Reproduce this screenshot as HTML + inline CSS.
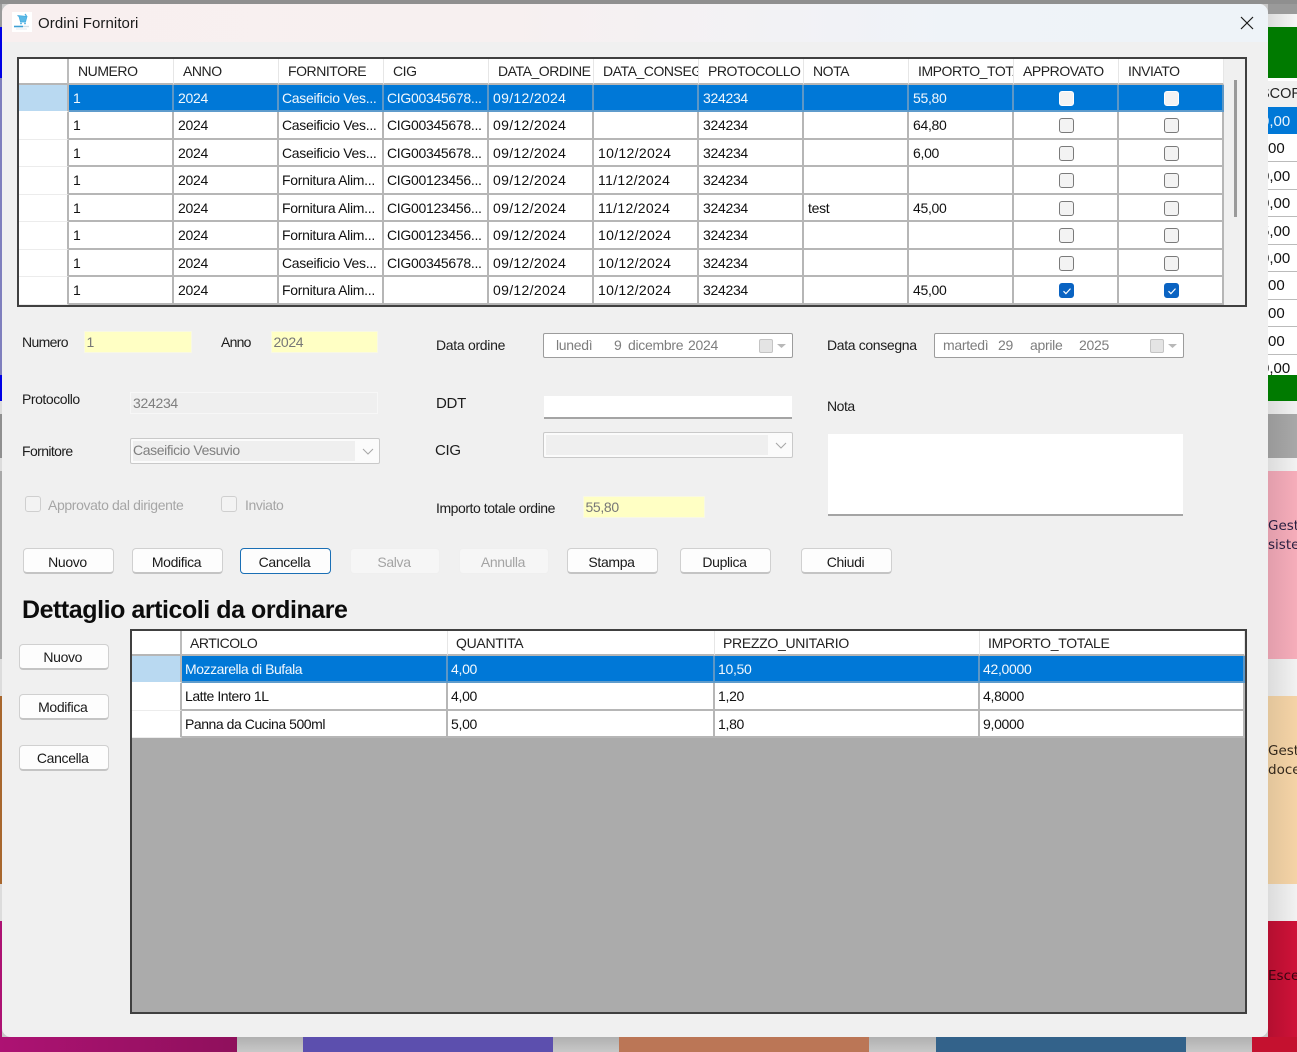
<!DOCTYPE html>
<html lang="it">
<head>
<meta charset="utf-8">
<title>Ordini Fornitori</title>
<style>
html,body{margin:0;padding:0;background:#c8c8c8}
body{position:relative;width:1297px;height:1052px;overflow:hidden;font-family:"Liberation Sans",sans-serif;font-size:14px;color:#111}
.a{position:absolute}
.t{position:absolute;white-space:nowrap;line-height:18px}
#dlg{position:absolute;left:2px;top:4px;width:1266px;height:1033px;background:#f0f0f0;border-radius:9px;overflow:hidden}
#tb{position:absolute;left:0;top:0;width:1266px;height:38px;background:linear-gradient(90deg,#f8efef 0%,#f7f0f0 40%,#eff3f8 75%,#eef3f8 100%)}
.grid{position:absolute;box-sizing:border-box;border:2px solid #404040;overflow:hidden}
.row{position:absolute;left:0;display:flex;box-sizing:border-box;background:#fff;font-size:14px;letter-spacing:-.3px}
.row>div{box-sizing:border-box;border-right:2px solid #b6b6b6;border-bottom:2px solid #b6b6b6;padding-left:3px;line-height:26px;white-space:nowrap;overflow:hidden;position:relative}
.row>div:first-child{border-bottom:1px solid #ececec;border-right:2px solid #b6b6b6}
.g1 .row>div{width:105px}
.g1 .row>div:first-child{width:50px}
.g1 .row>div:nth-child(2),.g1 .row>div:nth-child(3),.g1 .row>div:nth-child(6),.g1 .row>div:nth-child(7),.g1 .row>div:nth-child(8),.g1 .row>div:nth-child(9),.g1 .row>div:nth-child(10){padding-left:4px}
.g1 .row:not(.hd)>div:nth-child(6),.g1 .row:not(.hd)>div:nth-child(7){letter-spacing:.32px}
.hd>div{padding-left:9px!important;color:#222;border-right:1px solid #e6e6e6!important;border-bottom:2px solid #b6b6b6!important;line-height:25px!important;letter-spacing:-.45px}
.hd>div:first-child{border-right:2px solid #bcbcbc!important}
.sel{background:#0078d7;color:#f2f8fd}
.sel>div{border-color:#5d97c6!important;border-bottom-color:#5f9ccc!important}
.sel>div:first-child{background:#b9d9f1;border-bottom-color:#fff!important;border-right-color:#b6b6b6!important}
.cb{position:absolute;left:44.500px;top:6px;width:15px;height:15px;box-sizing:border-box;border:1.5px solid #7a7a7a;border-radius:3px;background:#f3f3f3}
.sel .cb{border-color:#fff;background:#f3f3f3}
.cb.on{background:#0a63c2;border-color:#0a63c2}
.cb.on svg{position:absolute;left:1px;top:1px}
.btn{position:absolute;box-sizing:border-box;width:91px;height:26px;background:#fdfdfd;border:1px solid #d0d0d0;border-bottom:2px solid #c4c4c4;border-radius:4px;text-align:center;line-height:25.5px;font-size:14px;letter-spacing:-.35px;color:#1a1a1a;padding-right:2px}
.btn.tp{line-height:27px}
.btn.dis{background:#f6f6f6;border:1px solid #efefef;color:#a4a4a4}
.btn.foc{border:1.5px solid #1a6fb5;}
.lb{position:absolute;white-space:nowrap;font-size:14px;letter-spacing:-.45px;color:#1d1d1d;line-height:18px}
.yl{position:absolute;background:#ffffc4;color:#777;font-size:14px;line-height:20px;padding-left:1.5px;box-sizing:border-box;letter-spacing:-.35px;border:1px solid #f8f8e4}
.dp{position:absolute;box-sizing:border-box;width:250px;height:25px;background:#fff;border:1px solid #9c9c9c;border-radius:2px;color:#7d7d7d;font-size:14px;line-height:23px;letter-spacing:-.3px}
.dp span{position:absolute;top:0;white-space:nowrap}
.dp svg{position:absolute;left:214px;top:4px}
.combo{position:absolute;box-sizing:border-box;width:250px;height:26px;background:#fbfbfb;border:1px solid #c9c9c9;border-radius:2px}
.combo i{position:absolute;left:2px;top:2px;width:222px;height:20px;background:#efefef;font-style:normal;color:#7f7f7f;line-height:19px;letter-spacing:-.38px;white-space:nowrap;font-size:14px}
.combo svg{position:absolute;left:231px;top:9px}
.g2 .row>div:nth-child(2){letter-spacing:-.45px}
.g2 .hd>div{padding-left:8px!important;letter-spacing:-.3px}
.g2 .hd>div:nth-child(2){padding-left:8px!important;letter-spacing:-.5px}
.side{position:absolute;font-family:"DejaVu Sans",sans-serif;font-size:13.5px;color:#222;white-space:nowrap;overflow:hidden;left:1268px;width:29px}
.v{position:absolute;left:1268px;width:29px;overflow:hidden;white-space:nowrap;line-height:18px;font-size:15px}
.v.cut{text-indent:-7px}
</style>
</head>
<body>
<!-- background app behind dialog -->
<div class="a" style="left:0;top:0;width:1297px;height:4px;background:#8f8f8f"></div>
<div class="a" style="left:1268px;top:4px;width:29px;height:10px;background:#9a9a9a"></div>
<div class="a" style="left:1268px;top:14px;width:29px;height:13px;background:linear-gradient(90deg,#dcdcdc,#f6f6f6)"></div>
<div class="a" style="left:1268px;top:27px;width:29px;height:51px;background:#007a00"></div>
<div class="a" style="left:1268px;top:78px;width:29px;height:297px;background:#fff"></div>
<div class="a" style="left:1268px;top:81px;width:29px;height:26px;background:#f0f0f0"></div>
<div class="a" style="left:1268px;top:107px;width:29px;height:27px;background:#0078d7"></div>
<div class="a" style="left:1268px;top:161px;width:29px;height:1px;background:#bbb"></div>
<div class="a" style="left:1268px;top:189px;width:29px;height:1px;background:#bbb"></div>
<div class="a" style="left:1268px;top:216px;width:29px;height:1px;background:#bbb"></div>
<div class="a" style="left:1268px;top:244px;width:29px;height:1px;background:#bbb"></div>
<div class="a" style="left:1268px;top:271px;width:29px;height:1px;background:#bbb"></div>
<div class="a" style="left:1268px;top:299px;width:29px;height:1px;background:#bbb"></div>
<div class="a" style="left:1268px;top:326px;width:29px;height:1px;background:#bbb"></div>
<div class="a" style="left:1268px;top:354px;width:29px;height:1px;background:#bbb"></div>
<div class="v" style="top:85px;font-size:14.5px;color:#222;text-indent:-8px">SCOR</div>
<div class="v cut" style="top:113px;color:#eaf4fc">0,00</div>
<div class="v" style="top:140px">00</div>
<div class="v cut" style="top:168px">0,00</div>
<div class="v cut" style="top:195px">0,00</div>
<div class="v cut" style="top:223px">5,00</div>
<div class="v cut" style="top:250px">0,00</div>
<div class="v" style="top:277px">00</div>
<div class="v" style="top:305px">00</div>
<div class="v" style="top:333px">00</div>
<div class="v cut" style="top:360px">0,00</div>
<div class="a" style="left:1268px;top:375px;width:29px;height:26px;background:#007a00"></div>
<div class="a" style="left:1268px;top:401px;width:29px;height:13px;background:linear-gradient(90deg,#dcdcdc,#f2f2f2)"></div>
<div class="a" style="left:1268px;top:414px;width:29px;height:44px;background:linear-gradient(90deg,#999,#a8a8a8)"></div>
<div class="a" style="left:1268px;top:458px;width:29px;height:13px;background:linear-gradient(90deg,#dcdcdc,#f2f2f2)"></div>
<div class="a" style="left:1268px;top:471px;width:29px;height:188px;background:linear-gradient(90deg,#e29eac,#f6adba)"></div>
<div class="a" style="left:1268px;top:659px;width:29px;height:37px;background:linear-gradient(90deg,#dcdcdc,#f2f2f2)"></div>
<div class="a" style="left:1268px;top:696px;width:29px;height:188px;background:linear-gradient(90deg,#e2c59b,#f5d3a6)"></div>
<div class="a" style="left:1268px;top:884px;width:29px;height:37px;background:linear-gradient(90deg,#dcdcdc,#f2f2f2)"></div>
<div class="a" style="left:1268px;top:921px;width:29px;height:131px;background:linear-gradient(90deg,#b40f30,#cf1238)"></div>
<div class="side" style="top:517px;line-height:19px;color:#2a2040">Gest<br>siste</div>
<div class="side" style="top:742px;line-height:19px;color:#33281c">Gest<br>doce</div>
<div class="side" style="top:967px;line-height:19px;color:#3a0410">Esce</div>

<!-- left strip -->
<div class="a" style="left:0;top:4px;width:2px;height:23px;background:#9a9a9a"></div>
<div class="a" style="left:0;top:27px;width:2px;height:51px;background:#0000e6"></div>
<div class="a" style="left:0;top:78px;width:2px;height:297px;background:#7f7fbd"></div>
<div class="a" style="left:0;top:375px;width:2px;height:26px;background:#0000e6"></div>
<div class="a" style="left:0;top:401px;width:2px;height:13px;background:#dcdcdc"></div>
<div class="a" style="left:0;top:414px;width:2px;height:44px;background:#8f8f8f"></div>
<div class="a" style="left:0;top:458px;width:2px;height:13px;background:#dcdcdc"></div>
<div class="a" style="left:0;top:471px;width:2px;height:188px;background:#a8a8a8"></div>
<div class="a" style="left:0;top:659px;width:2px;height:37px;background:#dcdcdc"></div>
<div class="a" style="left:0;top:696px;width:2px;height:188px;background:#a8672e"></div>
<div class="a" style="left:0;top:884px;width:2px;height:37px;background:#dcdcdc"></div>
<div class="a" style="left:0;top:921px;width:2px;height:131px;background:#ad1273"></div>

<!-- bottom strip -->
<div class="a" style="left:0;top:1037px;width:1297px;height:15px;background:linear-gradient(#b0b0b0,#c8c8c8)"></div>
<div class="a" style="left:0;top:1037px;width:237px;height:15px;background:linear-gradient(90deg,#ad1273,#8f105c)"></div>
<div class="a" style="left:303px;top:1037px;width:250px;height:15px;background:#5c4fae"></div>
<div class="a" style="left:619px;top:1037px;width:250px;height:15px;background:#bb7656"></div>
<div class="a" style="left:936px;top:1037px;width:250px;height:15px;background:#33628a"></div>
<div class="a" style="left:1252px;top:1037px;width:45px;height:15px;background:#c4112f"></div>

<div id="dlg">
  <div id="tb"></div>
</div>

<!-- title bar -->
<div class="a" style="left:12px;top:12px;width:20px;height:20px;background:#fff">
  <svg width="20" height="20" viewBox="0 0 20 20"><path d="M5.5 3.5l1.5 1 1.5 5.500h5l1.500-5.500z" fill="#5bb9e6" stroke="#45ace0" stroke-width=".8"/><path d="M13 2l1.500 2" stroke="#45ace0" stroke-width="1.200"/><circle cx="9" cy="11.500" r=".9" fill="#45ace0"/><circle cx="13" cy="11.500" r=".9" fill="#45ace0"/><path d="M2 14.500h9" stroke="#3d9fd4" stroke-width="1.600"/><path d="M11 14.500h6" stroke="#d3dfe6" stroke-width="1.400"/><path d="M4 17h11" stroke="#e2ebf0" stroke-width="1"/></svg>
</div>
<div class="t" style="left:38px;top:15px;font-size:15px;color:#1a1a1a;letter-spacing:.08px">Ordini Fornitori</div>
<svg class="a" style="left:1240px;top:16px" width="14" height="14" viewBox="0 0 14 14"><path d="M1 1l12 12M13 1L1 13" stroke="#1a1a1a" stroke-width="1.2" fill="none"/></svg>

<!-- top grid -->
<div class="grid g1" style="left:17px;top:57px;width:1230px;height:250px;background:#f0f0f0">
  <div class="row hd" style="top:0;height:25.5px;width:1205px"><div></div><div>NUMERO</div><div>ANNO</div><div>FORNITORE</div><div>CIG</div><div>DATA_ORDINE</div><div>DATA_CONSEGNA</div><div>PROTOCOLLO</div><div>NOTA</div><div>IMPORTO_TOTALE</div><div>APPROVATO</div><div>INVIATO</div></div>
  <div class="row sel" style="top:25.5px;height:27.5px"><div></div><div>1</div><div>2024</div><div>Caseificio Ves...</div><div>CIG00345678...</div><div>09/12/2024</div><div></div><div>324234</div><div></div><div>55,80</div><div><span class="cb"></span></div><div><span class="cb"></span></div></div>
  <div class="row" style="top:53px;height:27.5px"><div></div><div>1</div><div>2024</div><div>Caseificio Ves...</div><div>CIG00345678...</div><div>09/12/2024</div><div></div><div>324234</div><div></div><div>64,80</div><div><span class="cb"></span></div><div><span class="cb"></span></div></div>
  <div class="row" style="top:80.5px;height:27.5px"><div></div><div>1</div><div>2024</div><div>Caseificio Ves...</div><div>CIG00345678...</div><div>09/12/2024</div><div>10/12/2024</div><div>324234</div><div></div><div>6,00</div><div><span class="cb"></span></div><div><span class="cb"></span></div></div>
  <div class="row" style="top:108px;height:27.5px"><div></div><div>1</div><div>2024</div><div>Fornitura Alim...</div><div>CIG00123456...</div><div>09/12/2024</div><div>11/12/2024</div><div>324234</div><div></div><div></div><div><span class="cb"></span></div><div><span class="cb"></span></div></div>
  <div class="row" style="top:135.5px;height:27.5px"><div></div><div>1</div><div>2024</div><div>Fornitura Alim...</div><div>CIG00123456...</div><div>09/12/2024</div><div>11/12/2024</div><div>324234</div><div>test</div><div>45,00</div><div><span class="cb"></span></div><div><span class="cb"></span></div></div>
  <div class="row" style="top:163px;height:27.5px"><div></div><div>1</div><div>2024</div><div>Fornitura Alim...</div><div>CIG00123456...</div><div>09/12/2024</div><div>10/12/2024</div><div>324234</div><div></div><div></div><div><span class="cb"></span></div><div><span class="cb"></span></div></div>
  <div class="row" style="top:190.5px;height:27.5px"><div></div><div>1</div><div>2024</div><div>Caseificio Ves...</div><div>CIG00345678...</div><div>09/12/2024</div><div>10/12/2024</div><div>324234</div><div></div><div></div><div><span class="cb"></span></div><div><span class="cb"></span></div></div>
  <div class="row" style="top:218px;height:27.5px"><div></div><div>1</div><div>2024</div><div>Fornitura Alim...</div><div></div><div>09/12/2024</div><div>10/12/2024</div><div>324234</div><div></div><div>45,00</div><div><span class="cb on"><svg width="12" height="12" viewBox="0 0 12 12"><path d="M2.5 6.2l2.4 2.4 4.6-5" stroke="#fff" stroke-width="1.2" fill="none"/></svg></span></div><div><span class="cb on"><svg width="12" height="12" viewBox="0 0 12 12"><path d="M2.5 6.2l2.4 2.4 4.6-5" stroke="#fff" stroke-width="1.2" fill="none"/></svg></span></div></div>
  <div class="a" style="left:1215px;top:21px;width:3px;height:137px;background:#9a9a9a"></div>
</div>

<!-- form -->
<div class="lb" style="left:22px;top:333px;letter-spacing:-.65px">Numero</div>
<div class="yl" style="left:84px;top:331px;width:108px;height:22px">1</div>
<div class="lb" style="left:221px;top:333px;letter-spacing:-.75px">Anno</div>
<div class="yl" style="left:271px;top:331px;width:107px;height:22px">2024</div>

<div class="lb" style="left:436px;top:336px;letter-spacing:-.3px">Data ordine</div>
<div class="dp" style="left:543px;top:333px"><span style="left:12px">lunedì</span><span style="left:70px">9</span><span style="left:84px">dicembre</span><span style="left:144px">2024</span><svg width="32" height="16" viewBox="0 0 32 16"><rect x="1.5" y="1.5" width="13" height="13" rx="1.5" fill="#e4e4e4" stroke="#c4c4c4"/><path d="M19 6h9l-4.500 4z" fill="#b8b8b8"/></svg></div>
<div class="lb" style="left:827px;top:336px;letter-spacing:-.35px">Data consegna</div>
<div class="dp" style="left:934px;top:333px"><span style="left:8px">martedì</span><span style="left:63px">29</span><span style="left:95px">aprile</span><span style="left:144px">2025</span><svg width="32" height="16" viewBox="0 0 32 16"><rect x="1.5" y="1.5" width="13" height="13" rx="1.5" fill="#e4e4e4" stroke="#c4c4c4"/><path d="M19 6h9l-4.500 4z" fill="#b8b8b8"/></svg></div>

<div class="lb" style="left:22px;top:390px">Protocollo</div>
<div class="a" style="left:130px;top:392px;width:248px;height:22px;box-sizing:border-box;background:#efefef;border:1px solid #f7f7f7;color:#7f7f7f;line-height:21px;padding-left:2px;letter-spacing:-.3px">324234</div>
<div class="lb" style="left:436px;top:395px;font-size:15px;letter-spacing:-.3px">DDT</div>
<div class="a" style="left:544px;top:396px;width:248px;height:23px;background:#fff;border-bottom:2px solid #a4a4a4;box-sizing:border-box"></div>
<div class="lb" style="left:827px;top:397px">Nota</div>
<div class="a" style="left:828px;top:434px;width:355px;height:82px;background:#fff;border-bottom:2px solid #a4a4a4;box-sizing:border-box"></div>

<div class="lb" style="left:22px;top:442px;letter-spacing:-.6px">Fornitore</div>
<div class="combo" style="left:130px;top:438px"><i>Caseificio Vesuvio</i><svg width="12" height="8" viewBox="0 0 12 8"><path d="M1 1l5 5 5-5" stroke="#a8a8a8" stroke-width="1.1" fill="none"/></svg></div>
<div class="lb" style="left:435px;top:442px;font-size:15px;letter-spacing:-.3px">CIG</div>
<div class="combo" style="left:543px;top:432px"><i></i><svg width="12" height="8" viewBox="0 0 12 8"><path d="M1 1l5 5 5-5" stroke="#a8a8a8" stroke-width="1.1" fill="none"/></svg></div>

<div class="a" style="left:25px;top:496px;width:16px;height:16px;box-sizing:border-box;border:1.5px solid #cfcfcf;border-radius:3px;background:#f3f3f3"></div>
<div class="lb" style="left:48px;top:496px;color:#a6a6a6;letter-spacing:-.37px">Approvato dal dirigente</div>
<div class="a" style="left:221px;top:496px;width:16px;height:16px;box-sizing:border-box;border:1.5px solid #cfcfcf;border-radius:3px;background:#f3f3f3"></div>
<div class="lb" style="left:245px;top:496px;color:#a6a6a6;letter-spacing:-.4px">Inviato</div>

<div class="lb" style="left:436px;top:499px">Importo totale ordine</div>
<div class="yl" style="left:583px;top:496px;width:122px;height:22px">55,80</div>

<div class="btn tp" style="left:23px;top:548px">Nuovo</div>
<div class="btn tp" style="left:132px;top:548px">Modifica</div>
<div class="btn tp foc" style="left:240px;top:548px">Cancella</div>
<div class="btn tp dis" style="left:350px;top:548px;width:90px">Salva</div>
<div class="btn tp dis" style="left:459px;top:548px;width:90px">Annulla</div>
<div class="btn tp" style="left:567px;top:548px">Stampa</div>
<div class="btn tp" style="left:680px;top:548px">Duplica</div>
<div class="btn tp" style="left:801px;top:548px">Chiudi</div>

<div class="t" style="left:22px;top:595px;font-size:25px;font-weight:bold;line-height:30px;color:#0c0c0c;letter-spacing:-.45px">Dettaglio articoli da ordinare</div>

<div class="btn" style="left:18.500px;top:644px;width:90.500px">Nuovo</div>
<div class="btn" style="left:18.500px;top:694px;width:90.500px">Modifica</div>
<div class="btn" style="left:18.500px;top:745px;width:90.500px">Cancella</div>

<!-- bottom grid -->
<div class="grid g2" style="left:130px;top:629px;width:1117px;height:385px;background:#ababab">
  <div class="row hd" style="top:0;height:25px;width:1113px"><div style="width:50px"></div><div style="width:266px">ARTICOLO</div><div style="width:267px">QUANTITA</div><div style="width:265px">PREZZO_UNITARIO</div><div style="width:265px">IMPORTO_TOTALE</div></div>
  <div class="row sel" style="top:25px;height:27px;width:1113px"><div style="width:50px"></div><div style="width:266px">Mozzarella di Bufala</div><div style="width:267px">4,00</div><div style="width:265px">10,50</div><div style="width:265px">42,0000</div></div>
  <div class="row" style="top:52px;height:27.500px;width:1113px"><div style="width:50px"></div><div style="width:266px">Latte Intero 1L</div><div style="width:267px">4,00</div><div style="width:265px">1,20</div><div style="width:265px">4,8000</div></div>
  <div class="row" style="top:79.500px;height:27.500px;width:1113px"><div style="width:50px"></div><div style="width:266px">Panna da Cucina 500ml</div><div style="width:267px">5,00</div><div style="width:265px">1,80</div><div style="width:265px">9,0000</div></div>
</div>
</body>
</html>
